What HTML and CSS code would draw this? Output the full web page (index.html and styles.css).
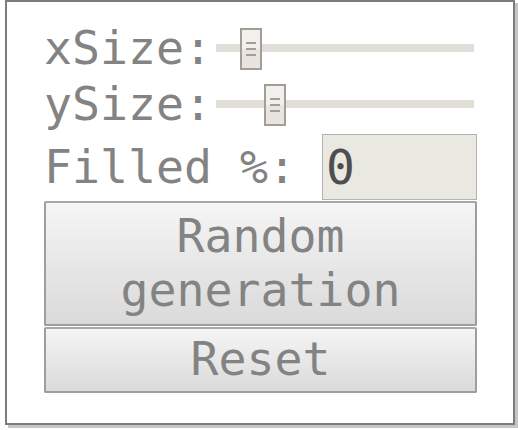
FILE: index.html
```html
<!DOCTYPE html>
<html>
<head>
<meta charset="utf-8">
<link rel="stylesheet" href="styles.css">
</head>
<body>
<div class="frame">
  <div class="row">
    <span class="label">xSize:</span>
    <div class="slider">
      <div class="track"></div>
      <div class="handle" style="left:24px"><i></i><i></i><i></i></div>
    </div>
  </div>
  <div class="row">
    <span class="label">ySize:</span>
    <div class="slider">
      <div class="track"></div>
      <div class="handle" style="left:48px"><i></i><i></i><i></i></div>
    </div>
  </div>
  <div class="row fill-row">
    <span class="label">Filled %:</span>
    <input class="field" type="text" value="0">
  </div>
  <button class="btn btn-big">Random<br>generation</button>
  <button class="btn btn-small">Reset</button>
</div>
</body>
</html>
```

FILE: styles.css
```css
html, body {
  margin: 0;
  padding: 0;
  background: #ffffff;
}
body {
  width: 518px;
  height: 430px;
  overflow: hidden;
}
.frame {
  box-sizing: border-box;
  margin-left: 5px;
  width: 510px;
  height: 425px;
  border: 2px solid #7c7c7c;
  box-shadow: 3px 3px 0 #c6c6c6;
  background: #ffffff;
  padding: 18px 36px 0 37px;
  display: flex;
  flex-direction: column;
  font-family: "DejaVu Sans Mono", monospace;
  color: #838383;
}
.row {
  display: flex;
  align-items: center;
  height: 56px;
}
.label {
  font-size: 46.5px;
  line-height: 56px;
  white-space: pre;
}
.slider {
  position: relative;
  width: 258px;
  height: 56px;
  margin-left: auto;
  margin-right: 3px;
  display: flex;
  align-items: center;
}
.track {
  width: 100%;
  height: 8px;
  background: #e2dfd9;
}
.handle {
  position: absolute;
  top: 8px;
  box-sizing: border-box;
  width: 22px;
  height: 42px;
  border: 2px solid #a29d95;
  background: linear-gradient(#f3f1ee 0%, #f1efeb 50%, #e8e5e0 50%, #e8e5e0 100%);
  display: flex;
  flex-direction: column;
  align-items: center;
  justify-content: center;
  gap: 4px;
  padding-bottom: 1px;
}
.handle i {
  display: block;
  width: 10px;
  height: 2px;
  background: #a29d95;
}
.fill-row {
  height: 66px;
  margin-top: 2px;
}
.field {
  box-sizing: border-box;
  margin: 0 0 0 auto;
  width: 155px;
  height: 66px;
  border: 1px solid #b2b2ae;
  background: #e9e8e1;
  padding: 0 0 0 3px;
  font-family: "DejaVu Sans Mono", monospace;
  font-size: 48px;
  color: #4e4e4e;
  outline: none;
}
.btn {
  box-sizing: border-box;
  width: 433px;
  margin: 1px 0 0 0;
  padding: 0;
  border: 2px solid #9e9e9e;
  border-top-color: #a8a8a8;
  border-radius: 2px;
  background: linear-gradient(#f5f5f5, #dadada);
  font-family: "DejaVu Sans Mono", monospace;
  font-size: 46.5px;
  line-height: 53.5px;
  color: #838383;
  text-align: center;
}
.btn-big {
  height: 125px;
}
.btn-small {
  height: 66px;
}
```
